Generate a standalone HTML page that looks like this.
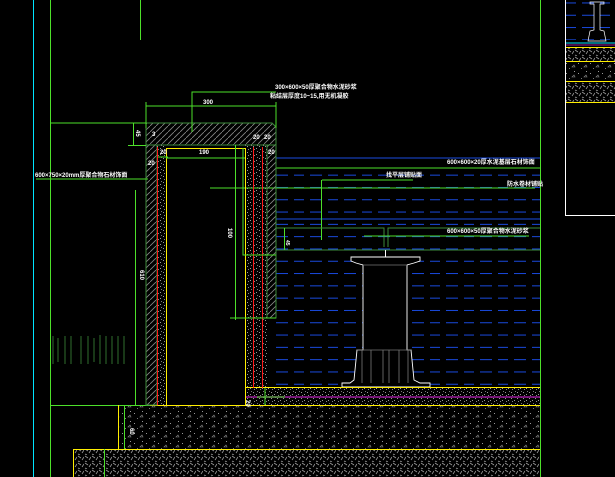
<!DOCTYPE html>
<html><head><meta charset="utf-8"><style>
html,body{margin:0;padding:0;background:#000;width:615px;height:477px;overflow:hidden}
svg{display:block}
text{font-family:"Liberation Sans","Noto Sans CJK SC",sans-serif;fill:#fff;font-size:6px;font-weight:bold}
</style></head><body>
<svg width="615" height="477" viewBox="0 0 615 477" xmlns="http://www.w3.org/2000/svg">
<defs>
<pattern id="hatch" width="6" height="6" patternUnits="userSpaceOnUse"><path d="M0 6L6 0" stroke="#888" stroke-width="0.8"/></pattern>
<pattern id="sp" width="6" height="6" patternUnits="userSpaceOnUse"><rect x="1" y="2" width="1" height="1" fill="#999"/><rect x="4" y="4" width="1" height="1" fill="#999"/><rect x="5" y="1" width="1" height="1" fill="#777"/><rect x="2" y="5" width="1" height="1" fill="#888"/></pattern>
<pattern id="sp2" width="12" height="10" patternUnits="userSpaceOnUse"><rect x="2" y="3" width="1" height="1" fill="#999"/><path d="M8 7l2 -2l1 2z" fill="none" stroke="#888" stroke-width="0.6"/><rect x="10" y="1" width="1" height="1" fill="#999"/><rect x="5" y="8" width="1" height="1" fill="#777"/></pattern>
<pattern id="sp3" width="7" height="7" patternUnits="userSpaceOnUse"><path d="M1 1l3 2M5 5l2-3M1 6l2 1" stroke="#999" stroke-width="0.8"/></pattern>
<pattern id="blue" width="34" height="12.3" patternUnits="userSpaceOnUse"><path d="M4 3h12M22 3h10" stroke="#1a4be0" stroke-width="1"/></pattern>
</defs>
<line x1="33.5" y1="0" x2="33.5" y2="477" stroke="#00e5ff"/>
<line x1="50.5" y1="0" x2="50.5" y2="477" stroke="#4de02a"/>
<line x1="140.5" y1="0" x2="140.5" y2="40" stroke="#4de02a"/>
<line x1="540.5" y1="0" x2="540.5" y2="477" stroke="#4de02a"/>
<rect x="276" y="170" width="264" height="217" fill="url(#blue)"/>
<line x1="276" y1="158" x2="540" y2="158" stroke="#1a4be0"/>
<line x1="276" y1="219" x2="540" y2="219" stroke="#1a4be0"/>
<line x1="276" y1="168" x2="540" y2="168" stroke="#4de02a"/>
<line x1="240" y1="188" x2="535" y2="188" stroke="#4de02a"/>
<line x1="322" y1="180" x2="413" y2="180" stroke="#4de02a"/>
<line x1="321.5" y1="180" x2="321.5" y2="240" stroke="#4de02a"/>
<path d="M276 228H352V228H384V247M388 247V228H540" stroke="#3c8a3a" fill="none"/>
<line x1="364" y1="236" x2="529" y2="236" stroke="#4de02a"/>
<line x1="276" y1="250" x2="540" y2="250" stroke="#3c8a3a"/>
<line x1="284.5" y1="228" x2="284.5" y2="250" stroke="#4de02a"/>
<text x="447" y="164">600×600×20厚水泥基层石材饰面</text>
<text x="386" y="177">找平层铺贴面</text>
<text x="507" y="186">防水卷材铺贴</text>
<text x="447" y="233">600×600×50厚聚合物水泥砂浆</text>
<text x="290" y="244" transform="rotate(90 290 240)" style="font-size:5px">45</text>
<path d="M351 257H420V261L414 263L407 265V350L411 350L414 380L420 383H430V387H342V383H350L354 380L357 350H363V265L356 263L351 261Z" fill="#000" stroke="#fff" stroke-width="0.9"/>
<line x1="385.5" y1="250" x2="385.5" y2="257" stroke="#fff"/>
<path d="M363 265H407M357 350H411M362 350V383M371 350V383M383 350V383M389 350V383M399 350V383M408 350V383" stroke="#777" stroke-width="0.8"/>
<rect x="248" y="387" width="292" height="18" fill="url(#sp)"/>
<line x1="245" y1="387.5" x2="540" y2="387.5" stroke="#ffee00"/>
<line x1="245" y1="397" x2="540" y2="397" stroke="#9a1a9a" stroke-width="1.5"/>
<rect x="119" y="405" width="421" height="44" fill="url(#sp2)"/>
<rect x="73" y="449" width="467" height="28" fill="url(#sp3)"/>
<line x1="50" y1="405.5" x2="150" y2="405.5" stroke="#4de02a"/>
<line x1="150" y1="405.5" x2="540" y2="405.5" stroke="#ffee00"/>
<line x1="73" y1="449.5" x2="540" y2="449.5" stroke="#ffee00"/>
<line x1="73.5" y1="449" x2="73.5" y2="477" stroke="#ffee00"/>
<line x1="118.5" y1="405" x2="118.5" y2="449" stroke="#ffee00"/>
<line x1="124.5" y1="405" x2="124.5" y2="449" stroke="#4de02a"/>
<line x1="104.5" y1="449" x2="104.5" y2="477" stroke="#4de02a"/>
<text x="130" y="428" transform="rotate(90 130 428)">60</text>
<path d="M146 123H272L276 127V145H146Z" fill="url(#hatch)" stroke="#3c8a3a"/>
<rect x="146" y="145" width="11" height="260" fill="url(#hatch)" stroke="#3c8a3a"/>
<rect x="267" y="145" width="9" height="173" fill="url(#hatch)" stroke="#3c8a3a"/>
<rect x="157" y="145" width="9" height="260" fill="url(#sp)"/>
<rect x="245" y="145" width="22" height="260" fill="url(#sp)"/>
<path d="M166.5 405V148.5H245.5V405" stroke="#ffee00" fill="none"/>
<line x1="157.5" y1="147" x2="157.5" y2="405" stroke="#ff1a1a"/>
<line x1="253.5" y1="147" x2="253.5" y2="388" stroke="#ff1a1a"/>
<line x1="262.5" y1="147" x2="262.5" y2="388" stroke="#ff1a1a"/>
<line x1="235.5" y1="145" x2="235.5" y2="320" stroke="#4de02a"/>
<line x1="135.5" y1="190" x2="135.5" y2="405" stroke="#4de02a"/>
<line x1="50" y1="123" x2="146" y2="123" stroke="#4de02a"/>
<line x1="133.5" y1="123" x2="133.5" y2="146" stroke="#4de02a"/>
<line x1="128" y1="145.5" x2="146" y2="145.5" stroke="#4de02a"/>
<text x="136" y="130" transform="rotate(90 136 130)">45</text>
<path d="M146 102V128M276 102V128M146 106H276" stroke="#4de02a" fill="none"/>
<text x="203" y="104">300</text>
<path d="M192 132V92H276" stroke="#4de02a" fill="none"/>
<text x="275" y="89">300×600×50厚聚合物水泥砂浆</text>
<text x="270" y="98">粘结层厚度10~15,用无机凝胶</text>
<line x1="36" y1="179" x2="148" y2="179" stroke="#4de02a"/>
<text x="35" y="177">600×750×20mm厚聚合物石材饰面</text>
<path d="M158 157H168M166 158H245" stroke="#4de02a"/>
<text x="160" y="154">20</text><text x="199" y="154">190</text>
<text x="148" y="165">20</text><text x="253" y="139">20</text><text x="268" y="154">20</text><text x="152" y="136">3</text><text x="264" y="139">20</text>
<path d="M243 148V255H276" stroke="#4de02a" fill="none"/>
<line x1="210" y1="188" x2="245" y2="188" stroke="#4de02a"/>
<text x="228" y="228" transform="rotate(90 228 228)">100</text>
<text x="140" y="270" transform="rotate(90 140 270)">610</text>
<line x1="230" y1="318" x2="276" y2="318" stroke="#4de02a"/>
<g stroke="#3c8a3a" stroke-width="0.8"><path d="M53 336V364M58 338V362M65 336V364M71 336V364M81 336V364M88 336V364M94 338V362M100 335V364M106 336V364M112 336V364M118 336V364M124 336V364"/></g>
<text x="250" y="404" transform="rotate(90 250 400)">20</text>
<path d="M257 397H285M265 388V405" stroke="#4de02a"/>
<rect x="565.5" y="-1" width="60" height="216.5" fill="#000" stroke="#fff"/>
<rect x="566" y="0" width="49" height="40" fill="url(#blue)"/>
<path d="M590 2H604V4H600V30L604 31L606 41H588L590 31L594 30V4H590Z" fill="none" stroke="#fff" stroke-width="0.7"/>
<line x1="566" y1="43" x2="615" y2="43" stroke="#00e5ff"/>
<line x1="566" y1="45" x2="615" y2="45" stroke="#9a1a9a"/>
<rect x="566" y="47" width="49" height="14" fill="url(#sp3)"/>
<rect x="566" y="61" width="49" height="20" fill="url(#sp2)"/>
<rect x="566" y="81" width="49" height="21" fill="url(#sp3)"/>
<path d="M566 47.5H615M566 61.5H615M566 81.5H615M566 102.5H615" stroke="#ffee00"/>
</svg>
</body></html>
